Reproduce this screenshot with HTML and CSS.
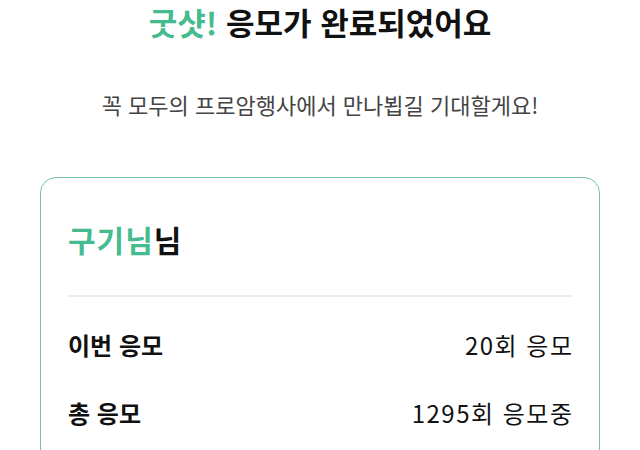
FILE: index.html
```html
<!DOCTYPE html>
<html lang="ko">
<head>
  <meta charset="UTF-8">
  <meta name="viewport" content="width=device-width, initial-scale=1.0">
  <title>응모 완료</title>
  <link rel="stylesheet" href="styles.css">
</head>
<body>

<!-- 완료 안내 -->
<div class="complete">
  <h1 class="complete-title"><span class="point">굿샷!</span> 응모가 완료되었어요</h1>
  <p class="complete-desc">꼭 모두의 프로암행사에서 만나뵙길 기대할게요!</p>
</div>

<!-- 응모 정보 카드 -->
<div class="card">
  <div class="card-name"><span class="point">구기님</span>님</div>
  <div class="card-list">
    <div class="card-row">
      <span class="card-label">이번 응모</span>
      <span class="card-value">20회 응모</span>
    </div>
    <div class="card-row">
      <span class="card-label">총 응모</span>
      <span class="card-value">1295회 응모중</span>
    </div>
  </div>
</div>

</body>
</html>
```

FILE: styles.css
```css
body {
  margin: 0;
  padding: 0 40px;
  font-family: "Noto Sans CJK KR", "Noto Sans", sans-serif;
  background-color: #fff;
  color: #111;
}

.point {
  color: #45bb8f;
}

.complete {
  text-align: center;
}

.complete-title {
  margin: 0;
  padding-top: 2px;
  font-size: 31px;
  font-weight: 700;
  line-height: 40px;
}

.complete-desc {
  margin: 47px 0 0;
  font-size: 22px;
  line-height: 30px;
  color: #444;
}

/* 카드 */
.card {
  margin-top: 58px;
  border: 1.5px solid #74c2aa;
  border-radius: 16px;
  padding: 0 27px 24px;
}

.card-name {
  padding: 41px 0 36px;
  font-size: 30px;
  font-weight: 700;
  line-height: 40px;
  letter-spacing: 1px;
  border-bottom: 2px solid #eeeeee;
}

.card-list {
  padding-top: 13px;
}

.card-row {
  display: flex;
  justify-content: space-between;
  align-items: center;
  height: 68px;
}

.card-label {
  font-size: 24px;
  font-weight: 700;
}

.card-value {
  font-size: 24px;
  font-weight: 400;
  letter-spacing: 1.5px;
  margin-right: -1.5px;
}
```
